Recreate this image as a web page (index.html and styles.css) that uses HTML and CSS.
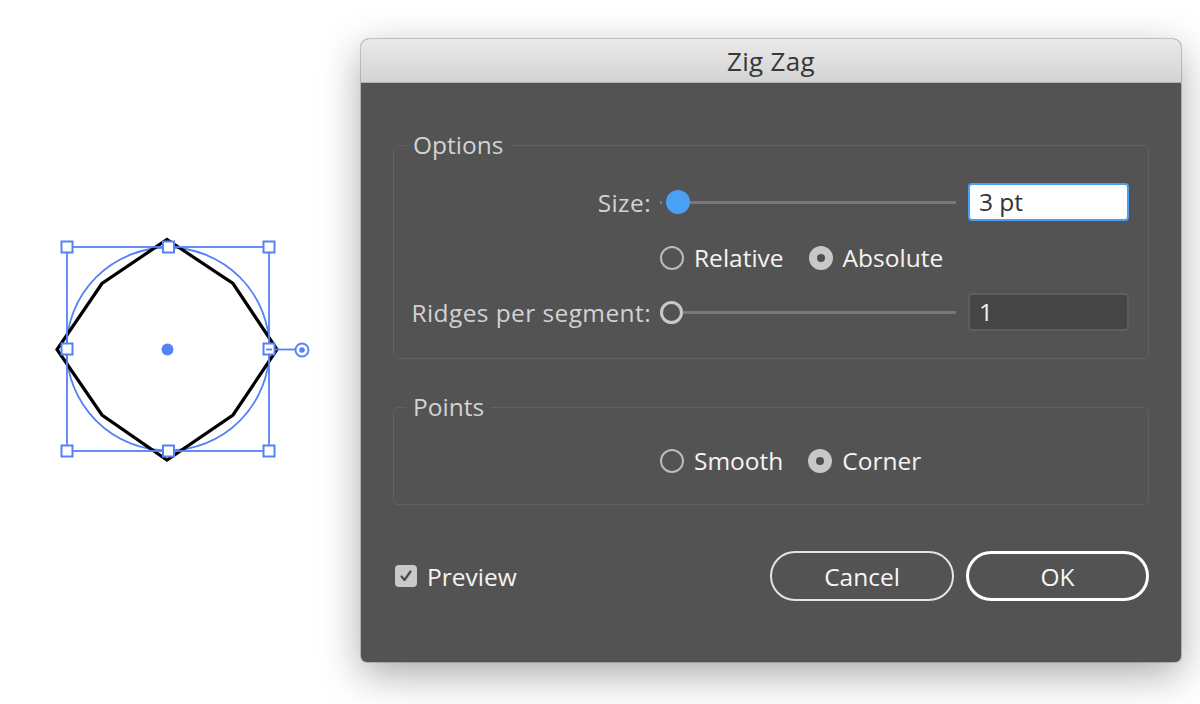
FILE: index.html
```html
<!DOCTYPE html>
<html lang="en">
<head>
<meta charset="utf-8">
<title>Zig Zag</title>
<link rel="stylesheet" href="styles.css">
</head>
<body>
<div class="stage">
  <div class="artboard">
    <svg width="361" height="704" viewBox="0 0 361 704" xmlns="http://www.w3.org/2000/svg">
      <circle cx="168" cy="349" r="101.5" fill="none" stroke="#5582f4" stroke-width="1.8"/>
      <path d="M167 239.5 L233 283.5 L277 349.5 L233 415 L167 460 L102 415 L57 349.5 L102 283.5 Z" fill="none" stroke="#000" stroke-width="3.2" stroke-linejoin="miter"/>
      <rect x="67" y="247" width="202" height="204" fill="none" stroke="#5582f4" stroke-width="1.8"/>
      <line x1="275" y1="349.5" x2="296" y2="349.5" stroke="#5582f4" stroke-width="1.8"/>
      <circle cx="302" cy="350" r="6.5" fill="#fff" stroke="#5582f4" stroke-width="1.9"/>
      <circle cx="302" cy="350" r="2.8" fill="#5582f4"/>
      <circle cx="167.5" cy="349.5" r="6" fill="#5582f4"/>
      <g fill="#fff" stroke="#5582f4" stroke-width="2">
        <rect x="61.5" y="241.5" width="11" height="11"/>
        <rect x="163" y="241.5" width="11" height="11"/>
        <rect x="263.5" y="241.5" width="11" height="11"/>
        <rect x="61.5" y="343.5" width="11" height="11"/>
        <rect x="263.5" y="343.5" width="11" height="11"/>
        <rect x="61.5" y="445.5" width="11" height="11"/>
        <rect x="163" y="445.5" width="11" height="11"/>
        <rect x="263.5" y="445.5" width="11" height="11"/>
      </g>
      <line x1="266" y1="349.5" x2="272" y2="349.5" stroke="#5582f4" stroke-width="1.8"/>
    </svg>
  </div>

  <div class="dialog">
    <div class="titlebar">Zig Zag</div>
    <div class="dialog-body">
      <div class="group group-options">
        <div class="legend">Options</div>
        <div class="row row-field">
          <div class="label">Size:</div>
          <div class="slider">
            <span class="tick"></span>
            <span class="thumb"></span>
            <span class="track"></span>
          </div>
          <div class="field field-active">3 pt</div>
        </div>
        <div class="row row-radios">
          <label class="radio"><span class="radio-dot"></span><span class="radio-text">Relative</span></label>
          <label class="radio"><span class="radio-dot checked"></span><span class="radio-text">Absolute</span></label>
        </div>
        <div class="row row-field row-ridges">
          <div class="label">Ridges per segment:</div>
          <div class="slider">
            <span class="ring"></span>
            <span class="track"></span>
          </div>
          <div class="field field-dark">1</div>
        </div>
      </div>

      <div class="group group-points">
        <div class="legend">Points</div>
        <div class="row row-radios">
          <label class="radio"><span class="radio-dot"></span><span class="radio-text">Smooth</span></label>
          <label class="radio"><span class="radio-dot checked"></span><span class="radio-text">Corner</span></label>
        </div>
      </div>

      <div class="footer">
        <label class="checkbox">
          <span class="check-box">
            <svg width="14" height="14" viewBox="0 0 14 14"><path d="M2.5 7.5 L5.5 11 L11.5 2.5" fill="none" stroke="#4a4a4a" stroke-width="2.2" stroke-linecap="round" stroke-linejoin="round"/></svg>
          </span>
          <span class="check-text">Preview</span>
        </label>
        <div class="buttons">
          <div class="btn">Cancel</div>
          <div class="btn btn-default">OK</div>
        </div>
      </div>
    </div>
  </div>
</div>
</body>
</html>
```

FILE: styles.css
```css
html, body {
  margin: 0;
  padding: 0;
}
body {
  width: 1200px;
  height: 704px;
  overflow: hidden;
  background: #ffffff;
  font-family: "Open Sans", "Noto Sans", sans-serif;
  font-weight: 500;
}
.stage {
  display: flex;
  align-items: flex-start;
  width: 1200px;
  height: 704px;
}
.artboard {
  width: 361px;
  height: 704px;
  flex: none;
}
.artboard svg {
  display: block;
}

.dialog {
  margin-top: 39px;
  width: 820px;
  height: 623px;
  flex: none;
  border-radius: 8px 8px 6px 6px;
  background: #535353;
  box-shadow: 0 12px 40px rgba(0, 0, 0, 0.34), 0 0 0 1px rgba(0, 0, 0, 0.18);
  display: flex;
  flex-direction: column;
  overflow: hidden;
}
.titlebar {
  height: 43px;
  flex: none;
  border-bottom: 1px solid #b1b1b1;
  background: linear-gradient(#e9e9e9, #d4d4d4);
  color: #383838;
  font-size: 26px;
  font-weight: 400;
  line-height: 45px;
  text-align: center;
  letter-spacing: 0.3px;
}
.dialog-body {
  padding: 62px 32px 0 32px;
  display: flex;
  flex-direction: column;
}

.group {
  position: relative;
  border: 1px solid #616161;
  border-radius: 5px;
}
.group-options {
  padding: 37px 0 27px 0;
}
.group-points {
  margin-top: 48px;
  padding: 40px 0 30px 0;
}
.legend {
  position: absolute;
  left: 12px;
  top: -17px;
  padding: 0 7px;
  background: #535353;
  color: #d2d2d2;
  font-size: 24.5px;
  line-height: 32px;
}

.row {
  display: flex;
  align-items: center;
}
.row-field {
  height: 38px;
}
.row-radios {
  height: 26px;
  padding-left: 266px;
  gap: 25px;
}
.group-options .row-radios {
  margin-top: 24px;
}
.row-ridges {
  margin-top: 22px;
}
.label {
  width: 257px;
  margin-right: 6px;
  text-align: right;
  color: #d2d2d2;
  font-size: 24.5px;
  letter-spacing: 0.4px;
  white-space: nowrap;
}
.slider {
  width: 299px;
  height: 38px;
  display: flex;
  align-items: center;
}
.tick {
  width: 2px;
  height: 3px;
  margin-left: 3px;
  background: #7a7a7a;
}
.thumb {
  width: 24px;
  height: 24px;
  margin-left: 4px;
  border-radius: 50%;
  background: #4aa0f5;
  flex: none;
}
.ring {
  width: 17px;
  height: 17px;
  margin-left: 3px;
  border: 3px solid #c9c9c9;
  border-radius: 50%;
  flex: none;
}
.track {
  flex: 1;
  height: 3px;
  background: #787878;
}
.field {
  margin-left: 12px;
  width: 161px;
  height: 38px;
  box-sizing: border-box;
  border-radius: 4px;
  padding-left: 9px;
  font-size: 24.5px;
  line-height: 34px;
}
.field-active {
  background: #ffffff;
  border: 2px solid #4a9ff5;
  color: #333333;
}
.field-dark {
  background: #454545;
  border: 2px solid #5d5d5d;
  color: #f2f2f2;
}

.radio {
  display: flex;
  align-items: center;
  gap: 10px;
}
.radio-dot {
  width: 20px;
  height: 20px;
  border: 2px solid #bcbcbc;
  border-radius: 50%;
  flex: none;
  display: flex;
  align-items: center;
  justify-content: center;
}
.radio-dot.checked {
  background: #c8c8c8;
  border-color: #c8c8c8;
}
.radio-dot.checked::after {
  content: "";
  width: 8px;
  height: 8px;
  border-radius: 50%;
  background: #4f4f4f;
}
.radio-text {
  color: #f4f4f4;
  font-size: 24.5px;
  line-height: 26px;
}

.footer {
  margin-top: 46px;
  height: 50px;
  display: flex;
  align-items: center;
  justify-content: space-between;
}
.checkbox {
  display: flex;
  align-items: center;
  gap: 10px;
  margin-left: 2px;
}
.check-box {
  width: 22px;
  height: 22px;
  border-radius: 4px;
  background: #c9c9c9;
  display: flex;
  align-items: center;
  justify-content: center;
}
.check-box svg {
  display: block;
}
.check-text {
  color: #f4f4f4;
  font-size: 24.5px;
}
.buttons {
  display: flex;
  gap: 12px;
}
.btn {
  width: 184px;
  height: 50px;
  box-sizing: border-box;
  border: 2px solid #e4e4e4;
  border-radius: 25px;
  color: #f6f6f6;
  font-size: 24.5px;
  display: flex;
  align-items: center;
  justify-content: center;
}
.btn-default {
  width: 183px;
  border: 3px solid #ffffff;
}
```
